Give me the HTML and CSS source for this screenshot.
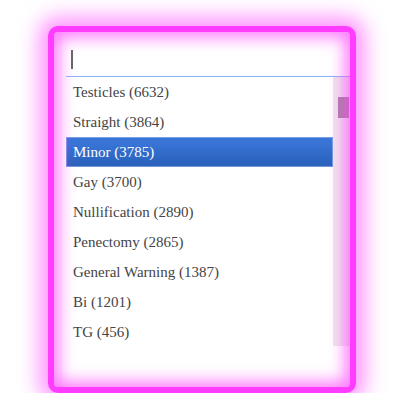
FILE: index.html
```html
<!DOCTYPE html>
<html lang="en">
<head>
    <meta charset="UTF-8">
    <meta name="viewport" content="width=device-width, initial-scale=1.0">
    <title>Tag Picker</title>
    <link rel="stylesheet" href="styles.css">
</head>
<body>
    <div class="page">
        <div class="picker">
            <div class="search">
                <span class="caret"></span>
            </div>
            <div class="listbox">
                <ul class="options">
                    <li>Testicles (6632)</li>
                    <li>Straight (3864)</li>
                    <li class="active">Minor (3785)</li>
                    <li>Gay (3700)</li>
                    <li>Nullification (2890)</li>
                    <li>Penectomy (2865)</li>
                    <li>General Warning (1387)</li>
                    <li>Bi (1201)</li>
                    <li>TG (456)</li>
                </ul>
                <div class="scrollbar">
                    <div class="thumb"></div>
                </div>
            </div>
        </div>
    </div>
</body>
</html>
```

FILE: styles.css
```css
html, body {
    margin: 0;
    padding: 0;
    background-color: #fff;
}

.page {
    padding: 26px 0 0 48px;
}

.picker {
    position: relative;
    box-sizing: border-box;
    width: 308px;
    height: 367px;
    padding: 12px 0 0 12px;
    border: 6px solid #ff3cff;
    border-radius: 10px;
    background-color: #fff;
    box-shadow: 0 0 20px 9px rgba(255, 60, 255, 0.55);
}

/* inner neon glow, drawn over the content */
.picker::after {
    content: "";
    position: absolute;
    top: 0;
    left: 0;
    right: 0;
    bottom: 0;
    border-radius: 4px;
    box-shadow: inset 0 0 16px 5px rgba(255, 60, 255, 0.7);
    pointer-events: none;
}

.search {
    height: 32px;
    border-bottom: 1px solid #8fb2f8;
    display: flex;
    align-items: center;
    padding-left: 5px;
}

.caret {
    width: 2px;
    height: 19px;
    background-color: #666;
    margin-top: -1px;
}

.listbox {
    display: flex;
    height: 269px;
}

.options {
    list-style: none;
    margin: 0;
    padding: 0;
    flex: 1;
    overflow: hidden;
    font-family: "Liberation Serif", "Times New Roman", Times, serif;
    font-size: 15px;
    color: #444;
}

.options li {
    height: 30px;
    line-height: 30px;
    padding-left: 7px;
    white-space: nowrap;
}

.options li.active {
    color: #fff;
    background: linear-gradient(#3875d7 20%, #2a62bc 90%);
    box-shadow: inset 0 0 0 1px rgba(160, 190, 240, 0.6);
}

.scrollbar {
    width: 17px;
    padding-top: 20px;
    background-color: #efe6ee;
}

.thumb {
    width: 11px;
    height: 21px;
    margin-left: 5px;
    background-color: #a8849f;
}
```
